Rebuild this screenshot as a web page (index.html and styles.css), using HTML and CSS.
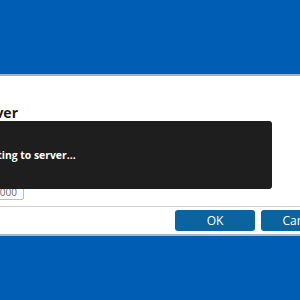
FILE: index.html
```html
<!DOCTYPE html>
<html>
<head>
<meta charset="utf-8">
<link rel="stylesheet" href="styles.css">
</head>
<body>
<div class="screen">
  <div class="dialog">
    <div class="dialog-body">
      <h2 class="title">Connect to Server</h2>
      <div class="field"><span class="field-text">8000</span></div>
      <div class="toast"><span class="toast-text">Connecting to server...</span></div>
    </div>
    <div class="dialog-footer">
      <button class="btn">OK</button>
      <button class="btn">Cancel</button>
    </div>
  </div>
</div>
</body>
</html>
```
FILE: styles.css
```css
html, body {
  margin: 0;
  padding: 0;
  width: 300px;
  height: 300px;
  overflow: hidden;
  background: #005db4;
  font-family: "Open Sans", "Noto Sans", sans-serif;
}
.screen {
  padding-top: 74px;
}
.dialog {
  margin-left: -130px;
  width: 490px;
  background: #fff;
  border-top: 2px solid #9fb3c8;
  border-bottom: 2px solid #a9b7c6;
}
.dialog-body {
  position: relative;
  height: 130px;
  box-sizing: border-box;
  padding: 28px 16px 6px 16px;
  display: flex;
  flex-direction: column;
  justify-content: space-between;
  align-items: flex-start;
}
.title {
  margin: 0;
  display: flex;
  justify-content: flex-end;
  width: 132px;
  white-space: nowrap;
  font-size: 14px;
  line-height: 18px;
  font-weight: 700;
  color: #1a1a1a;
}
.field {
  width: 130px;
  height: 14px;
  border: 1px solid #bdbdbd;
  border-radius: 2px;
  display: flex;
  justify-content: flex-end;
  align-items: center;
  padding-right: 6px;
  font-size: 10px;
  color: #666;
}
.toast {
  position: absolute;
  top: 45px;
  right: 88px;
  width: 332px;
  height: 68px;
  background: #1e1e1e;
  border-radius: 3px;
  display: flex;
  align-items: center;
  padding-left: 19px;
  box-sizing: border-box;
}
.toast-text {
  white-space: nowrap;
  color: #fff;
  font-size: 10.4px;
  font-weight: 700;
}
.dialog-footer {
  border-top: 1px solid #cfcfcf;
  display: flex;
  gap: 6px;
  padding: 3px 0 3px 305px;
}
.btn {
  width: 80px;
  height: 21px;
  border: none;
  border-radius: 3px;
  background: #0b64a0;
  color: #fff;
  font-family: "Open Sans", "Noto Sans", sans-serif;
  font-size: 12px;
  padding: 0;
}
```
